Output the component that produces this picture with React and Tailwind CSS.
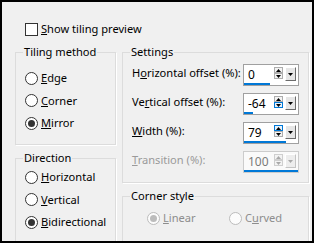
import React from 'react';

const Radio = ({ accel, rest, checked, disabled, pre = '' }) => (
  <div className="flex items-center h-4 gap-[3px] whitespace-nowrap">
    <span
      className={`w-[13px] h-[13px] shrink-0 rounded-full border flex items-center justify-center ${
        disabled ? 'border-[#bcbcbc] bg-[#fcfcfc]' : 'border-[#333333] bg-white'
      }`}
    >
      {checked && (
        <span className={`w-[7px] h-[7px] rounded-full ${disabled ? 'bg-[#bcbcbc]' : 'bg-[#333333]'}`} />
      )}
    </span>
    <span className={disabled ? 'text-[#8d8d8d]' : 'text-black'}>
      {pre}
      <u>{accel}</u>
      {rest}
    </span>
  </div>
);

const Tri = ({ down, color = '#000' }) => (
  <svg width="5" height="3" viewBox="0 0 5 3">
    <path d={down ? 'M0 0H5L2.5 3Z' : 'M0 3H5L2.5 0Z'} fill={color} />
  </svg>
);

const SpinField = ({ value, bar, hot, disabled }) => {
  const ink = disabled ? '#a8a8a8' : '#000';
  const box = (on) =>
    `w-[9px] h-[6px] border flex items-center justify-center ${
      on ? 'border-[#0078d7] bg-[#e5f1fb]' : disabled ? 'border-[#cfcfcf] bg-[#f3f3f3]' : 'border-[#adadad] bg-[#f3f3f3]'
    }`;
  return (
    <div
      className={`w-[56px] h-[22px] shrink-0 border flex flex-col ${
        disabled ? 'border-[#cccccc] bg-[#fafafa]' : 'border-[#a0a0a0] bg-white'
      }`}
    >
      <div className="flex h-[18px]">
        <span className={`flex-1 pl-[4px] pt-[2px] leading-[16px] text-[12px] ${disabled ? 'text-[#7a7a7a]' : 'text-black'}`}>
          {value}
        </span>
        <div className="flex flex-col pt-[2px] w-[9px] mr-[2px]">
          <span className={box(hot === 'up')}>
            <Tri color={ink} />
          </span>
          <span className={box(hot === 'down')}>
            <Tri down color={ink} />
          </span>
        </div>
        <span
          className={`mt-[2px] mr-[2px] w-[11px] h-[14px] flex items-center justify-center border ${
            disabled
              ? 'border-t-white border-l-white border-r-[#c4c4c4] border-b-[#c4c4c4] bg-[#ededed]'
              : 'border-t-white border-l-white border-r-[#6b6b6b] border-b-[#6b6b6b] bg-[#e6e6e6]'
          }`}
        >
          <Tri down color={ink} />
        </span>
      </div>
      <div className="h-[2px] bg-[#0078d7]" style={{ width: bar }} />
    </div>
  );
};

const Row = ({ children, field, disabled }) => (
  <div className="flex justify-between items-start h-[22px] whitespace-nowrap">
    <span className={`pt-[1px] ${disabled ? 'text-[#9a9a9a]' : 'text-black'}`}>{children}</span>
    {field}
  </div>
);

const Group = ({ title, className, children }) => (
  <fieldset className={`border border-[#dcdcdc] shadow-[1px_1px_0_#ffffff] min-w-0 ${className}`}>
    <legend className="ml-[7px] px-[1px] text-black whitespace-nowrap">{title}</legend>
    {children}
  </fieldset>
);

export default function App() {
  return (
    <div className="w-[316px] h-[246px] bg-white font-['Noto_Sans',sans-serif] text-[11.1px] leading-[16px]">
      <div className="w-[314px] h-[243px] border-2 border-black bg-[#f0f0f0] overflow-hidden">
        <div className="pl-[23px] pt-[19px] flex items-center gap-[3px] h-[35px] whitespace-nowrap">
          <span className="w-[13px] h-[13px] border border-[#333333] bg-white" />
          <span>
            <u>S</u>how tiling preview
          </span>
        </div>

        <div className="flex gap-[6px] pl-[13px] mt-[7px]">
          <div className="w-[101px] flex flex-col gap-[5px]">
            <Group title="Tiling method" className="h-[101px]">
              <div className="pl-[9px] pt-[10px] flex flex-col gap-[6.5px]">
                <Radio accel="E" rest="dge" />
                <Radio accel="C" rest="orner" />
                <Radio accel="M" rest="irror" checked />
              </div>
            </Group>
            <Group title="Direction" className="h-[120px]">
              <div className="pl-[9px] pt-[3px] flex flex-col gap-[6.5px]">
                <Radio accel="H" rest="orizontal" />
                <Radio accel="V" rest="ertical" />
                <Radio accel="B" rest="idirectional" checked />
              </div>
            </Group>
          </div>

          <div className="w-[187px] flex flex-col gap-[5px]">
            <Group title="Settings" className="h-[139px]">
              <div className="pl-[9px] pr-[9px] pt-[4px] flex flex-col gap-[7px]">
                <Row field={<SpinField value="0" bar="26px" />}>
                  H<u>o</u>rizontal offset (%):
                </Row>
                <Row field={<SpinField value="-64" bar="9px" hot="down" />}>
                  Ve<u>r</u>tical offset (%):
                </Row>
                <Row field={<SpinField value="79" bar="42px" hot="up" />}>
                  <u>W</u>idth (%):
                </Row>
                <Row disabled field={<SpinField value="100" bar="54px" disabled />}>
                  <u>T</u>ransition (%):
                </Row>
              </div>
            </Group>
            <Group title="Corner style" className="h-[80px]">
              <div className="pl-[24px] pt-[6px] flex">
                <div className="w-[82px]">
                  <Radio accel="L" rest="inear" checked disabled />
                </div>
                <Radio pre="C" accel="u" rest="rved" disabled />
              </div>
            </Group>
          </div>
        </div>
      </div>
    </div>
  );
}
